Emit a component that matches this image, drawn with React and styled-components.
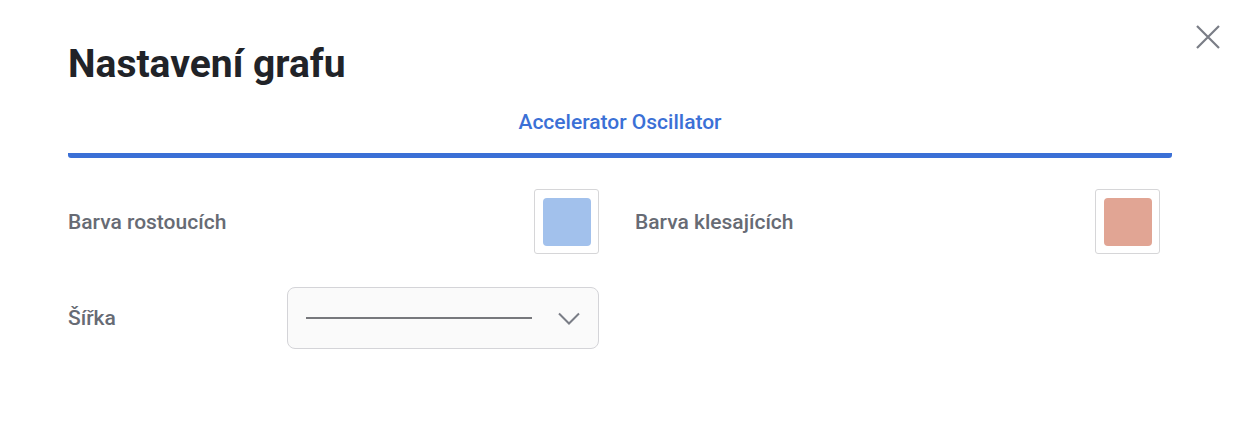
import React, { useState } from "react";
import styled, { createGlobalStyle } from "styled-components";

const GlobalStyle = createGlobalStyle`
  html, body { margin:0; padding:0; background:#fff; }
  body { font-family: Roboto, "Noto Sans", sans-serif; }
`;

const Modal = styled.div`
  position:relative;
  width:1242px;
  height:424px;
  box-sizing:border-box;
  padding:39px 70px 0 68px;
  background:#fff;
`;

const Title = styled.h1`
  margin:0;
  font-size:39px;
  line-height:50px;
  font-weight:700;
  color:#212328;
`;

const Close = styled.button`
  position:absolute;
  top:22px;
  right:19px;
  width:30px;
  height:30px;
  padding:0;
  border:none;
  background:none;
  cursor:pointer;
  svg{ display:block; }
`;

const Tabs = styled.div`
  display:flex;
  justify-content:center;
  border-bottom:5px solid #3b70d6;
  border-radius:3px;
`;

const Tab = styled.div`
  padding:21px 0 18px;
  font-size:21px;
  line-height:25px;
  font-weight:500;
  color:${p => p.active ? "#3b70d6" : "#666"};
`;

const Settings = styled.div`
  display:grid;
  grid-template-columns:531px 525px;
  column-gap:36px;
  row-gap:33px;
  margin-top:31px;
`;

const Row = styled.div`
  display:grid;
  grid-template-columns:219px 1fr;
  align-items:center;
`;

const Label = styled.span`
  font-size:21px;
  font-weight:500;
  color:#676b74;
`;

const SwatchBox = styled.div`
  justify-self:end;
  width:65px;
  height:65px;
  box-sizing:border-box;
  border:1px solid #d6d6d8;
  border-radius:3px;
  display:flex;
  align-items:center;
  justify-content:center;
  background:#fff;
`;

const Swatch = styled.div`
  width:48px;
  height:48px;
  border-radius:4px;
  background:${p => p.color};
`;

const Select = styled.div`
  height:62px;
  box-sizing:border-box;
  border:1px solid #d4d4d8;
  border-radius:8px;
  background:#fafafa;
  display:flex;
  align-items:center;
  padding:0 18px 0 18px;
  gap:26px;
`;

const LineSample = styled.div`
  flex:1;
  height:${p => p.width}px;
  background:#77787c;
`;

const Chevron = () => (
  <svg width="22" height="13" viewBox="0 0 22 13" fill="none">
    <path d="M1 1.5 L11 11.5 L21 1.5" stroke="#7a7d86" strokeWidth="2" />
  </svg>
);

export default function App() {
  const [tab] = useState("ao");
  return (
    <>
      <GlobalStyle />
      <Modal>
        <Title>Nastavení grafu</Title>
        <Close aria-label="Zavřít">
          <svg width="30" height="30" viewBox="0 0 30 30">
            <path d="M4 4 L26 26 M26 4 L4 26" stroke="#7a7d86" strokeWidth="2.2" />
          </svg>
        </Close>
        <Tabs>
          <Tab active={tab === "ao"}>Accelerator Oscillator</Tab>
        </Tabs>
        <Settings>
          <Row>
            <Label>Barva rostoucích</Label>
            <SwatchBox><Swatch color="#a2c1ec" /></SwatchBox>
          </Row>
          <Row>
            <Label>Barva klesajících</Label>
            <SwatchBox><Swatch color="#e1a594" /></SwatchBox>
          </Row>
          <Row>
            <Label>Šířka</Label>
            <Select>
              <LineSample width={2} />
              <Chevron />
            </Select>
          </Row>
        </Settings>
      </Modal>
    </>
  );
}
